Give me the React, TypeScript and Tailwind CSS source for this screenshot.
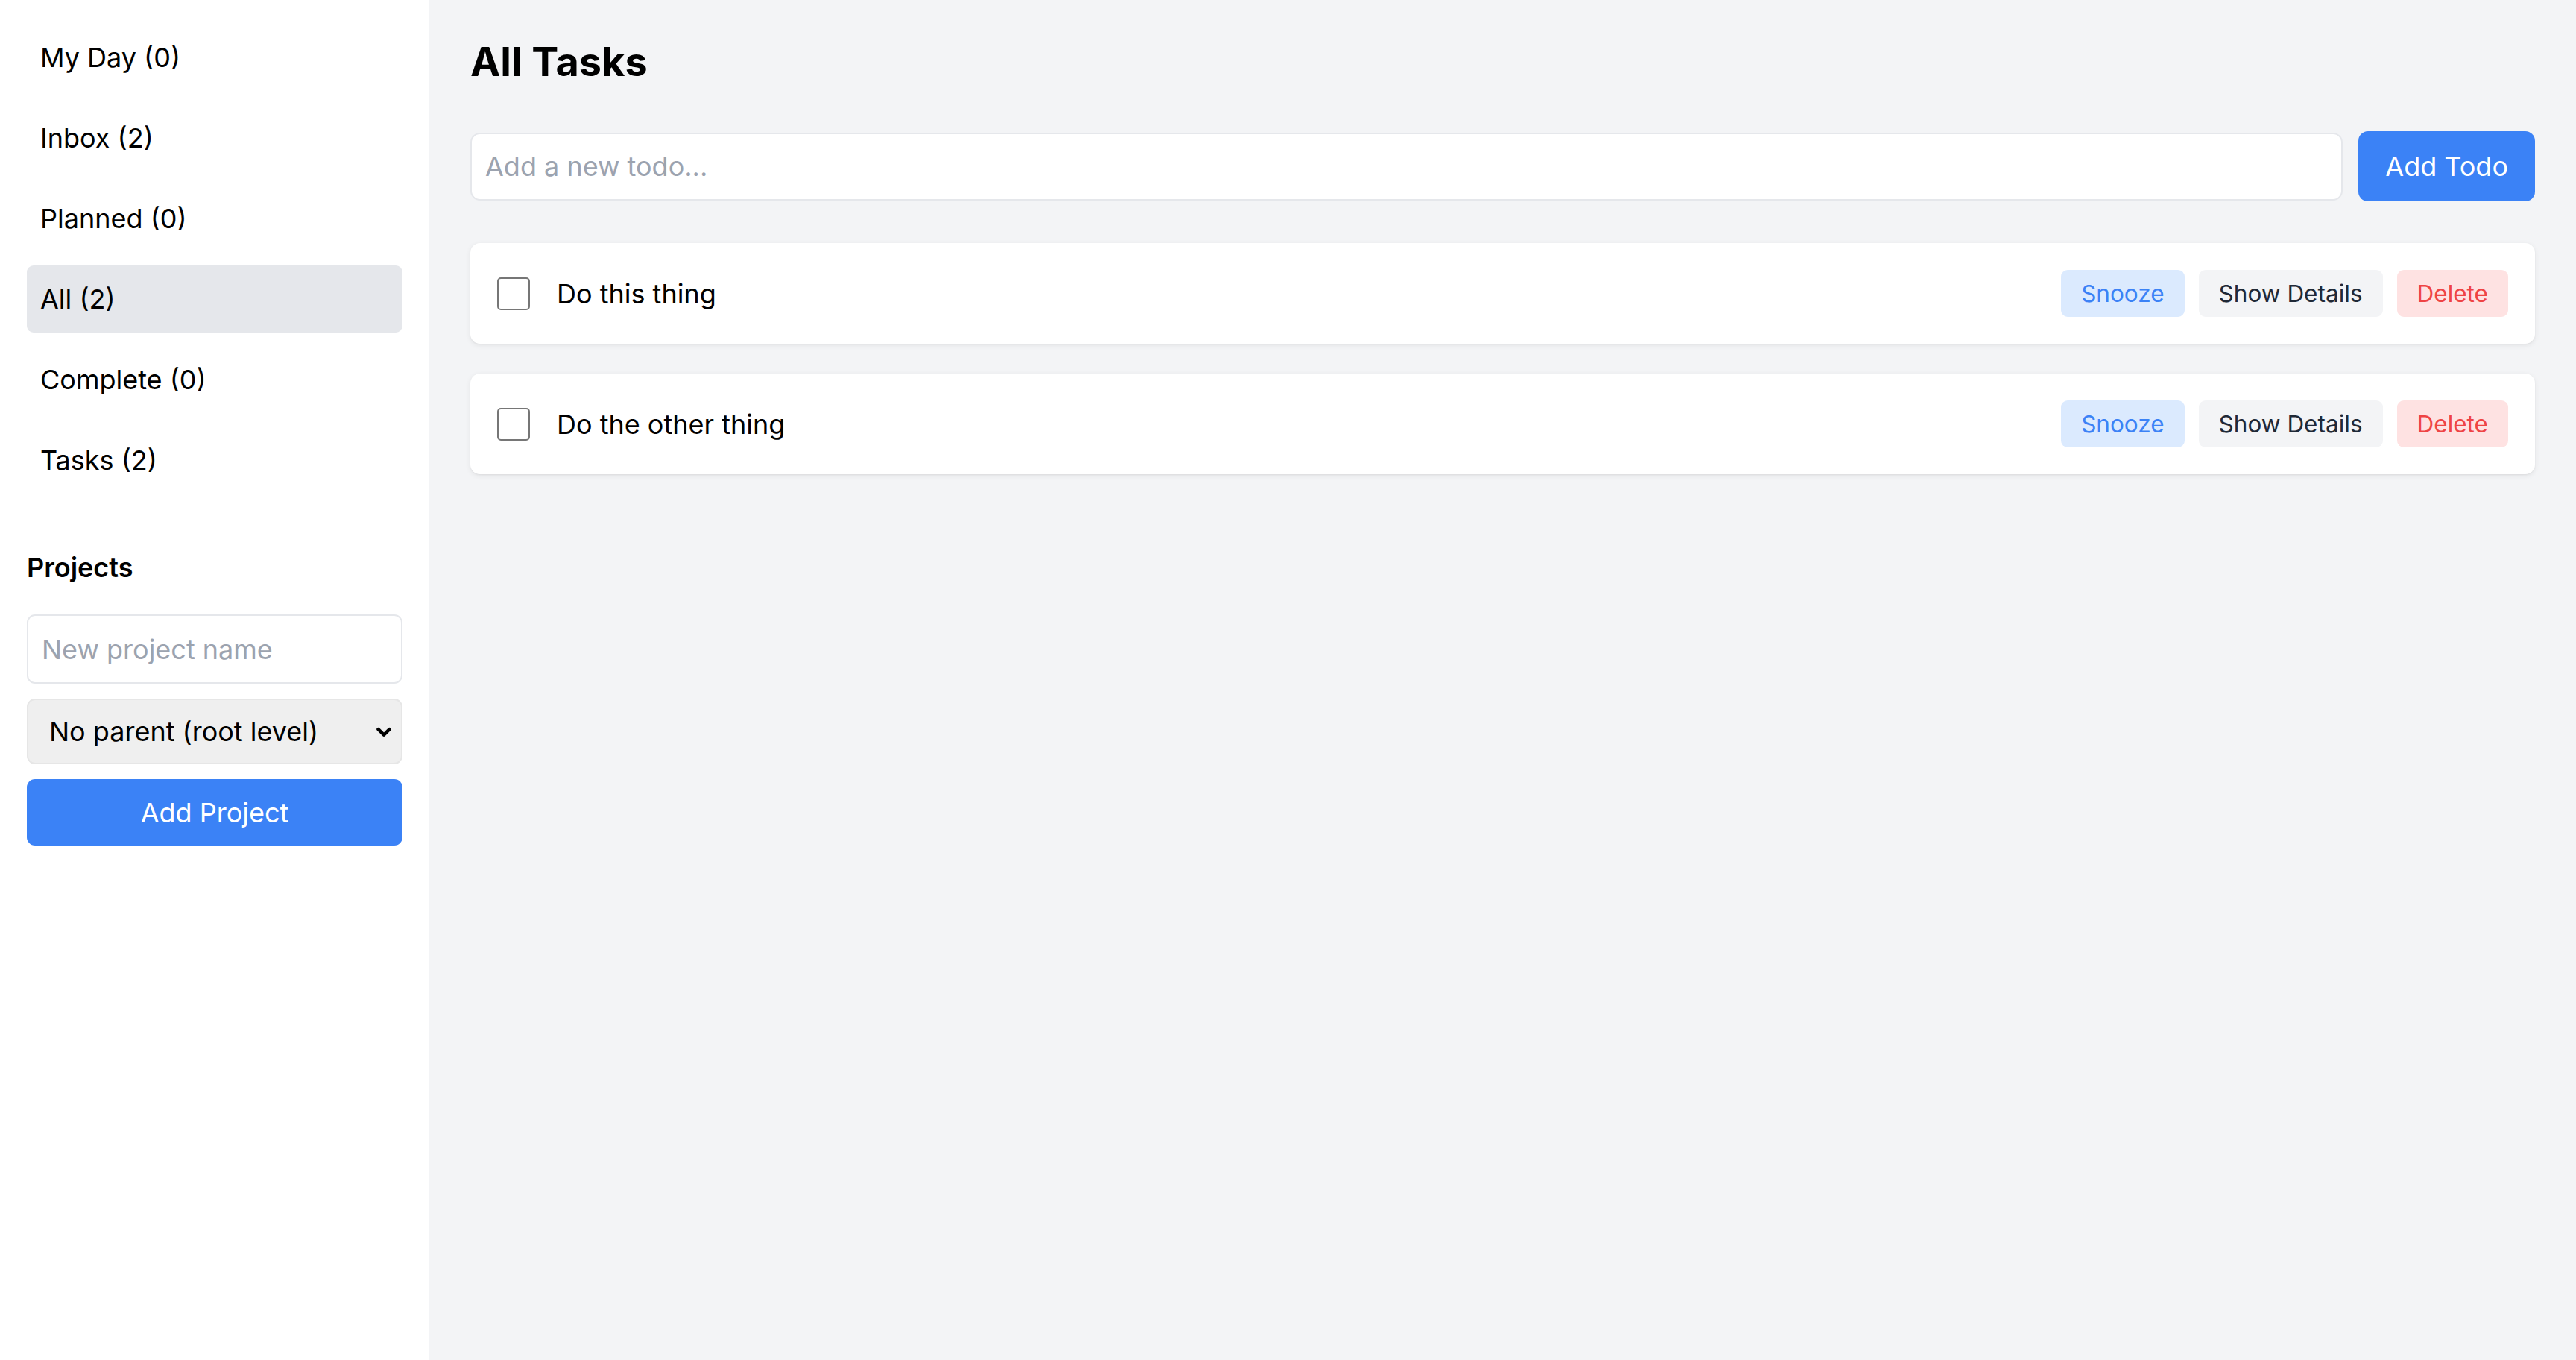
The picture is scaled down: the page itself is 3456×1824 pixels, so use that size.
import clsx from "clsx";

type View = { label: string; count: number };

const views: View[] = [
  { label: "My Day", count: 0 },
  { label: "Inbox", count: 2 },
  { label: "Planned", count: 0 },
  { label: "All", count: 2 },
  { label: "Complete", count: 0 },
  { label: "Tasks", count: 2 },
];

const todos = [
  { id: 1, title: "Do this thing" },
  { id: 2, title: "Do the other thing" },
];

function Sidebar({ active }: { active: string }) {
  return (
    <aside className="w-144 shrink-0 bg-white px-9 pt-8">
      <nav className="flex flex-col gap-[18px]">
        {views.map((view) => (
          <button
            key={view.label}
            className={clsx(
              "rounded-[9px] px-[18px] py-[18px] text-left text-[36px] leading-[54px] text-black",
              view.label === active && "bg-[#e5e7eb]",
            )}
          >
            {view.label} ({view.count})
          </button>
        ))}
      </nav>

      <h2 className="mt-[72px] mb-9 text-[36px] font-semibold leading-[54px] text-black">
        Projects
      </h2>
      <div className="flex flex-col gap-[20px]">
        <input
          placeholder="New project name"
          className="h-[93px] w-full rounded-[11px] border-2 border-[#e5e7eb] bg-white px-[18px] text-[36px] text-black outline-none placeholder:text-[#9ca3af]"
        />
        <div className="relative">
          <select className="h-[88px] w-full appearance-none rounded-[11px] border-2 border-[#e6e6e6] bg-[#efefef] pl-[28px] pr-[60px] text-[36px] text-black outline-none">
            <option>No parent (root level)</option>
          </select>
          <svg
            viewBox="0 0 16 16"
            className="pointer-events-none absolute right-[10px] top-1/2 h-[30px] w-[30px] -translate-y-1/2"
            fill="none"
            stroke="black"
            strokeWidth={2.4}
            strokeLinecap="round"
            strokeLinejoin="round"
          >
            <path d="M4 6.5l4 4 4-4" />
          </svg>
        </div>
        <button className="h-[89px] w-full rounded-[11px] bg-[#3b82f6] text-[36px] text-white">
          Add Project
        </button>
      </div>
    </aside>
  );
}

function TodoRow({ title }: { title: string }) {
  return (
    <div className="flex h-[135px] items-center rounded-[13px] bg-white px-9 shadow-[0_2px_7px_0_rgba(0,0,0,0.08),0_1px_2px_0_rgba(0,0,0,0.04)]">
      <input
        type="checkbox"
        className="h-[44px] w-[44px] shrink-0 appearance-none rounded-[5px] border-2 border-[#767676] bg-white"
      />
      <span className="ml-9 flex-1 text-[36px] leading-[54px] text-black">{title}</span>
      <div className="flex items-center gap-[19px] text-[31.5px] leading-[45px]">
        <button className="rounded-[9px] bg-[#dbeafe] px-[27px] py-[9px] text-[#3b82f6]">
          Snooze
        </button>
        <button className="rounded-[9px] bg-[#f3f4f6] px-[27px] py-[9px] text-[#1f2937]">
          Show Details
        </button>
        <button className="rounded-[9px] bg-[#fee2e2] px-[27px] py-[9px] text-[#ef4444]">
          Delete
        </button>
      </div>
    </div>
  );
}

export default function App() {
  return (
    <div className="flex h-screen w-full bg-[#f3f4f6] font-['Inter',sans-serif]">
      <Sidebar active="All" />
      <main className="flex-1 px-[55px] pt-[47px]">
        <h1 className="mb-[57px] text-[54px] font-bold leading-[72px] text-black">All Tasks</h1>
        <div className="mb-[56px] flex items-center gap-[21px]">
          <input
            placeholder="Add a new todo..."
            className="h-[91px] flex-1 rounded-[13px] border-2 border-[#e5e7eb] bg-white px-[18px] text-[36px] text-black outline-none placeholder:text-[#9ca3af]"
          />
          <button className="h-[94px] rounded-[13px] bg-[#3b82f6] px-9 text-[36px] text-white">
            Add Todo
          </button>
        </div>
        <div className="flex flex-col gap-[40px]">
          {todos.map((todo) => (
            <TodoRow key={todo.id} title={todo.title} />
          ))}
        </div>
      </main>
    </div>
  );
}
